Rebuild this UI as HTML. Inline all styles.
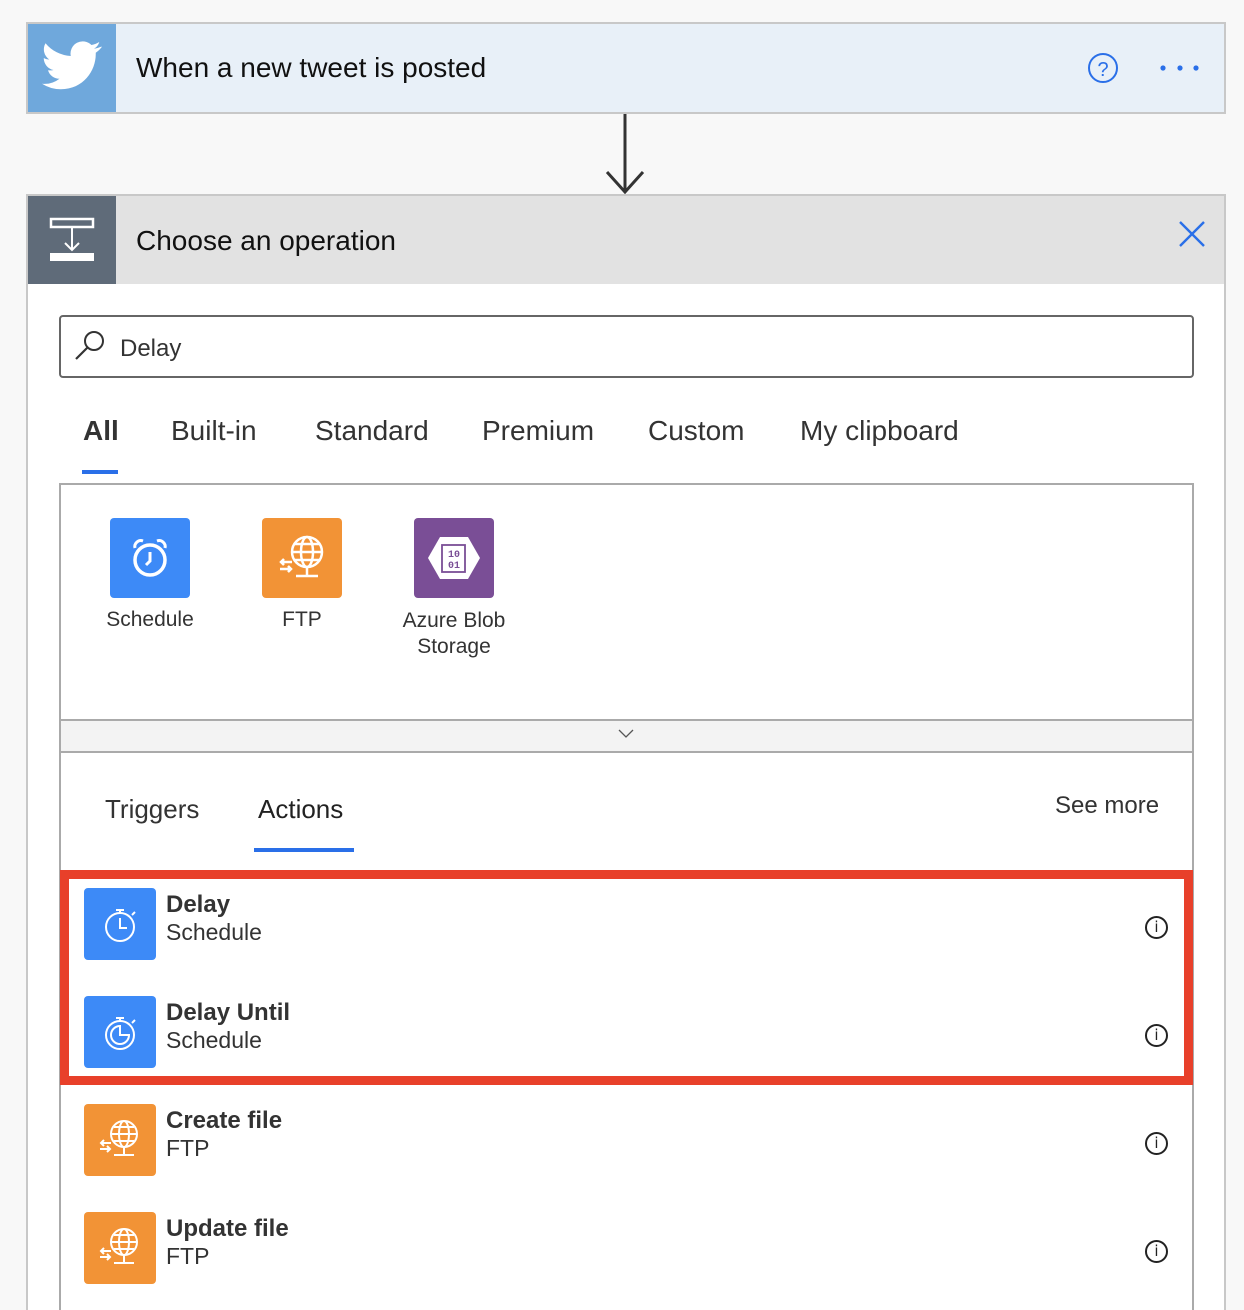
<!DOCTYPE html>
<html style="width:1244px;height:1310px;overflow:hidden"><head><meta charset="utf-8"><style>
*{margin:0;padding:0;box-sizing:border-box}
body{width:1244px;height:1310px;background:#f8f8f8;position:relative;overflow:hidden;font-family:"Liberation Sans","DejaVu Sans",sans-serif;color:#222}
.a{position:absolute}
.t{white-space:nowrap}
.ic{position:absolute;width:72px;height:72px;border-radius:4px;left:84px}
.blue{background:#3d8af7}.orange{background:#f29336}
.title{position:absolute;left:166px;font-weight:bold;font-size:24px;color:#333}
.sub{position:absolute;left:166px;font-size:23px;color:#333}
.info{position:absolute;left:1145px;width:23px;height:23px;border:2px solid #222;border-radius:50%;font-size:15px;text-align:center;line-height:19px;font-family:"DejaVu Sans",sans-serif}
</style></head><body>
<div class="a" style="left:26px;top:22px;width:1200px;height:92px;border:2px solid #c8c8c8;background:#e8f0f8"></div>
<div class="a" style="left:28px;top:24px;width:88px;height:88px;background:#6fa8dc"></div>
<svg class="a" style="left:42px;top:40px" width="60" height="52" viewBox="0 0 24 20"><path fill="#fff" d="M23.6 2.3c-.9.4-1.8.6-2.8.8 1-.6 1.8-1.5 2.1-2.7-.9.6-2 1-3.1 1.2A4.9 4.9 0 0 0 11.5 6 13.9 13.9 0 0 1 1.4.9a4.9 4.9 0 0 0 1.5 6.5c-.8 0-1.6-.2-2.2-.6 0 2.4 1.7 4.4 3.9 4.8-.7.2-1.5.2-2.2.1.6 2 2.4 3.4 4.6 3.4A9.8 9.8 0 0 1 0 17.1 13.9 13.9 0 0 0 7.5 19.3c9.1 0 14-7.5 14-14v-.6c1-.7 1.8-1.5 2.5-2.4z"/></svg>
<div class="a t" style="left:136px;top:52px;font-size:28px;color:#111">When a new tweet is posted</div>
<svg class="a" style="left:1086px;top:51px" width="34" height="34"><circle cx="17" cy="17" r="14" fill="none" stroke="#2a6fe8" stroke-width="2"/><text x="17" y="25" font-size="20" text-anchor="middle" fill="#2a6fe8" font-family="Liberation Sans">?</text></svg>
<svg class="a" style="left:1156px;top:60px" width="48" height="16"><circle cx="7" cy="8" r="2.6" fill="#2a6fe8"/><circle cx="24" cy="8" r="2.6" fill="#2a6fe8"/><circle cx="40" cy="8" r="2.6" fill="#2a6fe8"/></svg>
<svg class="a" style="left:600px;top:114px" width="50" height="82"><path d="M25 0V78M7 58L25 78 43 58" fill="none" stroke="#333" stroke-width="3"/></svg>
<div class="a" style="left:26px;top:194px;width:1200px;height:1130px;border:2px solid #c8c8c8;border-bottom:none;background:#fff"></div>
<div class="a" style="left:28px;top:196px;width:1196px;height:88px;background:#e2e2e2"></div>
<div class="a" style="left:28px;top:196px;width:88px;height:88px;background:#5f6b79"></div>
<svg class="a" style="left:48px;top:216px" width="48" height="48"><rect x="3" y="3" width="42" height="8" fill="none" stroke="#fff" stroke-width="2.5"/><path d="M24 11V34M17 27L24 34 31 27" fill="none" stroke="#fff" stroke-width="2"/><rect x="2" y="37" width="44" height="8" fill="#fff"/></svg>
<div class="a t" style="left:136px;top:225px;font-size:28px;color:#111">Choose an operation</div>
<svg class="a" style="left:1178px;top:220px" width="28" height="28"><path d="M2 2L26 26M26 2L2 26" stroke="#2a6fe8" stroke-width="2.4"/></svg>
<div class="a" style="left:59px;top:315px;width:1135px;height:63px;border:2px solid #666;border-radius:4px"></div>
<svg class="a" style="left:74px;top:328px" width="34" height="34"><circle cx="20" cy="13" r="9" fill="none" stroke="#333" stroke-width="2"/><path d="M13.5 19.5L2 31" stroke="#333" stroke-width="2.2"/></svg>
<div class="a t" style="left:120px;top:335px;font-size:24px;color:#333">Delay</div>
<div class="a t" style="left:83px;top:415px;font-size:28px;font-weight:bold;color:#333">All</div>
<div class="a t" style="left:171px;top:415px;font-size:28px;color:#333">Built-in</div>
<div class="a t" style="left:315px;top:415px;font-size:28px;color:#333">Standard</div>
<div class="a t" style="left:482px;top:415px;font-size:28px;color:#333">Premium</div>
<div class="a t" style="left:648px;top:415px;font-size:28px;color:#333">Custom</div>
<div class="a t" style="left:800px;top:415px;font-size:28px;color:#333">My clipboard</div>
<div class="a" style="left:82px;top:470px;width:36px;height:4px;background:#2a6fe8"></div>
<div class="a" style="left:59px;top:483px;width:1135px;height:840px;border:2px solid #aaa;border-bottom:none"></div>
<div class="a" style="left:61px;top:719px;width:1131px;height:34px;background:#f3f3f3;border-top:2px solid #aaa;border-bottom:2px solid #aaa"></div>
<svg class="a" style="left:618px;top:728px" width="16" height="12"><path d="M1 2L8 9 15 2" fill="none" stroke="#555" stroke-width="1.3"/></svg>
<div class="a" style="left:110px;top:518px;width:80px;height:80px;border-radius:4px;background:#3d8af7"></div>
<svg class="a" style="left:110px;top:518px" width="80" height="80"><circle cx="40" cy="42" r="15" fill="none" stroke="#fff" stroke-width="3.5"/><path d="M40 34V43L36 47" fill="none" stroke="#fff" stroke-width="3"/><path d="M25 30A6 6 0 0 1 33 23M55 30A6 6 0 0 0 47 23" fill="none" stroke="#fff" stroke-width="3"/></svg>
<div class="a" style="left:262px;top:518px;width:80px;height:80px;border-radius:4px;background:#f29336"></div>
<svg class="a" style="left:262px;top:518px" width="80" height="80"><g fill="none" stroke="#fff" stroke-width="2.5"><circle cx="45" cy="34" r="15"/><ellipse cx="45" cy="34" rx="6" ry="15"/><path d="M30 34H60M33 26H57M33 42H57M45 49V58M34 58H56"/><path d="M30 44H19M22 41L19 44 22 47M18 51H29M26 48L29 51 26 54"/></g></svg>
<div class="a" style="left:414px;top:518px;width:80px;height:80px;border-radius:4px;background:#7a4e96"></div>
<svg class="a" style="left:414px;top:518px" width="80" height="80"><path d="M26 19H54L66 40 54 61H26L14 40Z" fill="#fff"/><rect x="28" y="27" width="23" height="27" fill="none" stroke="#7a4e96" stroke-width="1.8"/><text x="40" y="39" font-size="10" font-weight="bold" text-anchor="middle" fill="#7a4e96" font-family="Liberation Mono">10</text><text x="40" y="50" font-size="10" font-weight="bold" text-anchor="middle" fill="#7a4e96" font-family="Liberation Mono">01</text></svg>
<div class="a t" style="left:100px;top:608px;width:100px;text-align:center;font-size:21px;color:#333">Schedule</div>
<div class="a t" style="left:252px;top:608px;width:100px;text-align:center;font-size:21px;color:#333">FTP</div>
<div class="a" style="left:394px;top:608px;width:120px;text-align:center;font-size:21px;color:#333;line-height:26px">Azure Blob Storage</div>
<div class="a t" style="left:105px;top:794px;font-size:26px;color:#333">Triggers</div>
<div class="a t" style="left:258px;top:794px;font-size:26px;color:#222">Actions</div>
<div class="a" style="left:254px;top:848px;width:100px;height:4px;background:#2a6fe8"></div>
<div class="a t" style="left:1055px;top:792px;font-size:24px;color:#333">See more</div>
<div class="a" style="left:60px;top:870px;width:1133px;height:215px;border:9px solid #e8402a"></div>
<div class="ic blue" style="top:888px"></div>
<svg class="a" style="left:84px;top:888px" width="72" height="72"><g fill="none" stroke="#fff" stroke-width="2"><circle cx="36" cy="39" r="14"/><path d="M36 30V40H43M32 22H40M36 22V25M48 27L51 24"/></g></svg>
<div class="title t" style="top:891px">Delay</div><div class="sub t" style="top:919px">Schedule</div>
<div class="info" style="top:916px">i</div>
<div class="ic blue" style="top:996px"></div>
<svg class="a" style="left:84px;top:996px" width="72" height="72"><g fill="none" stroke="#fff" stroke-width="2"><circle cx="36" cy="39" r="14"/><path d="M36 30A9 9 0 1 0 45 39H36Z"/><path d="M32 22H40M36 22V25M48 27L51 24"/></g></svg>
<div class="title t" style="top:999px">Delay Until</div><div class="sub t" style="top:1027px">Schedule</div>
<div class="info" style="top:1024px">i</div>
<div class="ic orange" style="top:1104px"></div>
<svg class="a" style="left:84px;top:1104px" width="72" height="72"><g fill="none" stroke="#fff" stroke-width="2"><circle cx="40" cy="30" r="13"/><ellipse cx="40" cy="30" rx="5" ry="13"/><path d="M27 30H53M30 23H50M30 37H50M40 43V50M30 51H50"/><path d="M27 39H17M20 36L17 39 20 42M16 45H26M23 42L26 45 23 48"/></g></svg>
<div class="title t" style="top:1107px">Create file</div><div class="sub t" style="top:1135px">FTP</div>
<div class="info" style="top:1132px">i</div>
<div class="ic orange" style="top:1212px"></div>
<svg class="a" style="left:84px;top:1212px" width="72" height="72"><g fill="none" stroke="#fff" stroke-width="2"><circle cx="40" cy="30" r="13"/><ellipse cx="40" cy="30" rx="5" ry="13"/><path d="M27 30H53M30 23H50M30 37H50M40 43V50M30 51H50"/><path d="M27 39H17M20 36L17 39 20 42M16 45H26M23 42L26 45 23 48"/></g></svg>
<div class="title t" style="top:1215px">Update file</div><div class="sub t" style="top:1243px">FTP</div>
<div class="info" style="top:1240px">i</div>
</body></html>
